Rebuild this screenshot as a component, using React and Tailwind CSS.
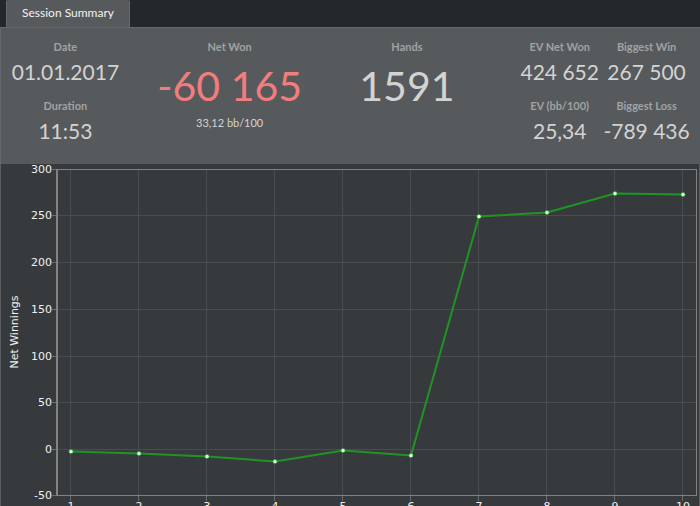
const yTicks = [
  { label: '300', y: 5 },
  { label: '250', y: 51 },
  { label: '200', y: 98 },
  { label: '150', y: 145 },
  { label: '100', y: 192 },
  { label: '50', y: 238 },
  { label: '0', y: 285 },
  { label: '-50', y: 331 },
];

const points = [
  { hand: 1, x: 71, y: 287 },
  { hand: 2, x: 139, y: 289 },
  { hand: 3, x: 207, y: 292 },
  { hand: 4, x: 275, y: 297 },
  { hand: 5, x: 343, y: 286 },
  { hand: 6, x: 411, y: 291 },
  { hand: 7, x: 479, y: 52 },
  { hand: 8, x: 547, y: 48 },
  { hand: 9, x: 615, y: 29 },
  { hand: 10, x: 683, y: 30 },
];

function Stat({ label, value }) {
  return (
    <div className="flex flex-col items-center whitespace-nowrap">
      <dt className="text-[11px] leading-5 font-bold text-[#a0a2a3]">{label}</dt>
      <dd className="text-[21px] leading-[30px] text-[#d3d3d3]">{value}</dd>
    </div>
  );
}

function BigStat({ label, value, note, tone }) {
  return (
    <div className="flex flex-col items-center whitespace-nowrap">
      <dt className="text-[11px] leading-5 font-bold text-[#a0a2a3]">{label}</dt>
      <dd className={`text-[41px] leading-[58px] ${tone}`}>{value}</dd>
      {note && <dd className="text-[11px] leading-4 text-[#d3d3d3]">{note}</dd>}
    </div>
  );
}

function WinningsChart() {
  return (
    <svg
      viewBox="0 0 700 342"
      className="block w-full bg-[#373a3c] font-['DejaVu_Sans',sans-serif] text-[11px]"
      role="img"
      aria-label="Net Winnings"
    >
      <g stroke="#4a4d4f" shapeRendering="crispEdges">
        {yTicks.slice(1, -1).map((t) => (
          <line key={t.label} x1="58" x2="696" y1={t.y + 0.5} y2={t.y + 0.5} />
        ))}
        {points.map((p) => (
          <line key={p.hand} x1={p.x - 0.5} x2={p.x - 0.5} y1="6" y2="331" />
        ))}
      </g>
      <g stroke="#6b6d6e" shapeRendering="crispEdges">
        {yTicks.map((t) => (
          <line key={t.label} x1="52" x2="56" y1={t.y + 0.5} y2={t.y + 0.5} />
        ))}
        {points.map((p) => (
          <line key={p.hand} x1={p.x - 0.5} x2={p.x - 0.5} y1="332" y2="337" />
        ))}
      </g>
      <g fill="#828282" shapeRendering="crispEdges">
        <rect x="56" y="5" width="2" height="327" />
        <rect x="56" y="5" width="641" height="1" />
        <rect x="56" y="331" width="641" height="1" />
        <rect x="696" y="5" width="1" height="327" />
      </g>
      <g fill="#5c5f61" shapeRendering="crispEdges">
        <rect x="0" y="0" width="1" height="342" />
        <rect x="699" y="0" width="1" height="342" />
      </g>
      <g fill="#f0f0f0">
        {yTicks.map((t) => (
          <text key={t.label} x="52" y={t.y + 4} textAnchor="end">
            {t.label}
          </text>
        ))}
        {points.map((p) => (
          <text key={p.hand} x={p.x} y="346" textAnchor="middle">
            {p.hand}
          </text>
        ))}
        <text transform="translate(18 168) rotate(-90)" textAnchor="middle">
          Net Winnings
        </text>
      </g>
      <polyline
        points={points.map((p) => `${p.x},${p.y + 0.5}`).join(' ')}
        fill="none"
        stroke="#1f9425"
        strokeWidth="2"
        strokeLinejoin="round"
      />
      {points.map((p) => (
        <g key={p.hand}>
          <circle cx={p.x} cy={p.y + 0.5} r="2.3" fill="#3fc446" />
          <circle cx={p.x} cy={p.y + 0.5} r="1.5" fill="#ffffff" />
        </g>
      ))}
    </svg>
  );
}

export default function App() {
  return (
    <main className="min-h-screen bg-[#24282b] font-[Lato,sans-serif]">
      <nav className="flex pl-1.5" role="tablist">
        <button
          type="button"
          role="tab"
          aria-selected="true"
          className="h-[27px] rounded-t-xs border-x border-[#66696b] bg-[#575a5c] px-[15px] pb-px text-xs leading-5 text-[#f2f2f2]"
        >
          Session Summary
        </button>
      </nav>
      <dl className="grid grid-cols-[129fr_200fr_155fr_216fr] border-t border-l border-[#66696b] bg-[#575a5c] pt-[9px] pb-[18px]">
        <div className="grid content-start gap-[9px]">
          <Stat label="Date" value="01.01.2017" />
          <Stat label="Duration" value="11:53" />
        </div>
        <BigStat label="Net Won" value="-60 165" note="33,12 bb/100" tone="text-[#f27d7d]" />
        <BigStat label="Hands" value="1591" tone="text-[#d3d3d3]" />
        <div className="grid grid-cols-2 content-start gap-y-[9px] pr-2.5 pl-8">
          <Stat label="EV Net Won" value="424 652" />
          <Stat label="Biggest Win" value="267 500" />
          <Stat label="EV (bb/100)" value="25,34" />
          <Stat label="Biggest Loss" value="-789 436" />
        </div>
      </dl>
      <WinningsChart />
    </main>
  );
}
